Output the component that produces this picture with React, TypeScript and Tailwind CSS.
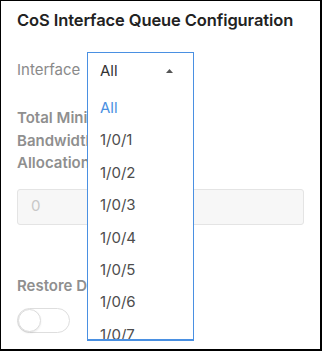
import React from 'react'

const options = ['All', '1/0/1', '1/0/2', '1/0/3', '1/0/4', '1/0/5', '1/0/6', '1/0/7', '1/0/8']

export default function App() {
  return (
    <div
      className="relative w-[322px] h-[351px] overflow-hidden bg-white border-l border-t border-r-2 border-b-2 border-black"
      style={{ fontFamily: 'Inter, "Liberation Sans", sans-serif' }}
    >
      <div className="pl-4 pr-4">
        {/* Title */}
        <h1 className="pt-[8px] text-[16.5px] leading-[22px] font-semibold text-[#222] tracking-[-0.1px]">
          CoS Interface Queue Configuration
        </h1>

        {/* Interface row */}
        <div className="mt-[21px] flex items-center h-[36px]">
          <div className="w-[70px] text-[15px] text-[#8a8a8a]">Interface</div>
        </div>

        {/* Bandwidth */}
        <div className="mt-[19px] w-[80px] text-[15px] leading-[22.5px] font-semibold text-[#8f8f8f] whitespace-nowrap">
          <div>Total Minimum</div>
          <div>Bandwidth</div>
          <div>Allocation</div>
        </div>
        <div className="mt-[14px] h-[36px] w-full rounded-[3px] border border-[#e4e4e4] bg-[#f7f7f7] flex items-center px-[13px] text-[15px] text-[#c8c8c8]">
          0
        </div>

        {/* Restore defaults */}
        <div className="mt-[50px] text-[15px] leading-[22px] font-semibold text-[#8f8f8f] whitespace-nowrap">
          Restore Defaults
        </div>
        <div className="mt-[11px] relative w-[53px] h-[25px] rounded-full border border-[#dedede] bg-white">
          <div className="absolute left-0 top-0 w-[23px] h-[23px] rounded-full border border-[#dcdcdc] bg-white shadow-[0_1px_2px_rgba(0,0,0,0.08)]" />
        </div>
      </div>

      {/* Open dropdown overlay */}
      <div className="absolute left-[86px] top-[51px] w-[107px] h-[289px] bg-white border border-b-2 border-[#4a90e2] flex flex-col">
        <div className="h-[36px] flex items-center justify-between pl-[12px] pr-[20px] text-[15px] text-[#333]">
          <span>All</span>
          <svg width="7" height="4" viewBox="0 0 7 4">
            <path d="M3.5 0L7 4H0z" fill="#555" />
          </svg>
        </div>
        <div className="flex-1 overflow-hidden pt-[3px]">
          {options.map((o, i) => (
            <div
              key={o}
              className={`h-[32.4px] flex items-center pl-[12px] text-[15px] ${i === 0 ? 'text-[#4a90e2]' : 'text-[#4d4d4d]'}`}
            >
              {o}
            </div>
          ))}
        </div>
      </div>
    </div>
  )
}
